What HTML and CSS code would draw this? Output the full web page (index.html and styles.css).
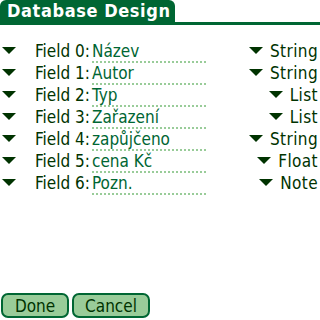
FILE: index.html
```html
<!DOCTYPE html>
<html>
<head>
  <title>Database Design</title>
  <link rel="stylesheet" href="styles.css">
</head>
<body>
  <div class="form">
    <div class="titlebar">
      <div class="title">Database Design</div>
    </div>

    <div class="fields">
      <div class="row">
        <span class="arrow"></span>
        <span class="label">Field 0:</span>
        <span class="value">Název</span>
        <span class="type"><span class="arrow"></span>String</span>
      </div>
      <div class="row">
        <span class="arrow"></span>
        <span class="label">Field 1:</span>
        <span class="value">Autor</span>
        <span class="type"><span class="arrow"></span>String</span>
      </div>
      <div class="row">
        <span class="arrow"></span>
        <span class="label">Field 2:</span>
        <span class="value">Typ</span>
        <span class="type"><span class="arrow"></span>List</span>
      </div>
      <div class="row">
        <span class="arrow"></span>
        <span class="label">Field 3:</span>
        <span class="value">Zařazení</span>
        <span class="type"><span class="arrow"></span>List</span>
      </div>
      <div class="row">
        <span class="arrow"></span>
        <span class="label">Field 4:</span>
        <span class="value">zapůjčeno</span>
        <span class="type"><span class="arrow"></span>String</span>
      </div>
      <div class="row">
        <span class="arrow"></span>
        <span class="label">Field 5:</span>
        <span class="value">cena Kč</span>
        <span class="type"><span class="arrow"></span>Float</span>
      </div>
      <div class="row">
        <span class="arrow"></span>
        <span class="label">Field 6:</span>
        <span class="value">Pozn.</span>
        <span class="type"><span class="arrow"></span>Note</span>
      </div>
    </div>

    <div class="buttons">
      <button class="btn btn-done">Done</button>
      <button class="btn btn-cancel">Cancel</button>
    </div>
  </div>
</body>
</html>
```

FILE: styles.css
```css
/* Palm style form */
body {
  margin: 0;
  background-color: #ffffff;
  font-family: "DejaVu Sans Condensed", "DejaVu Sans", sans-serif;
  color: #003300;
}

.form {
  width: 320px;
  height: 320px;
  display: flex;
  flex-direction: column;
}

.titlebar {
  height: 22px;
  border-bottom: 3px solid #006633;
  display: flex;
}

.title {
  background-color: #006633;
  color: #ffffff;
  font-weight: bold;
  font-size: 18px;
  letter-spacing: 0.6px;
  line-height: 22px;
  padding: 0 6px 0 7px;
  width: 162px;
  border-radius: 6px 6px 0 0;
  white-space: nowrap;
}

.fields {
  padding-top: 15px;
  flex: 1;
}

.row {
  height: 22px;
  display: flex;
  align-items: center;
  font-size: 17px;
}

.arrow {
  width: 0;
  height: 0;
  border-left: 7px solid transparent;
  border-right: 7px solid transparent;
  border-top: 7px solid #003300;
  margin-top: -2px;
}

.row > .arrow {
  margin-left: 2px;
  margin-right: 19px;
}

.label {
  width: 57px;
  white-space: nowrap;
}

.value {
  color: #006633;
  width: 114px;
  height: 20px;
  line-height: 20px;
  border-bottom: 2px dotted #99cc99;
  margin-top: 2px;
  white-space: nowrap;
}

.type {
  flex: 1;
  display: flex;
  align-items: center;
  justify-content: flex-end;
  padding-right: 2px;
  letter-spacing: 0.4px;
}

.type .arrow {
  margin-right: 7px;
}

.buttons {
  display: flex;
  gap: 3px;
  padding: 0 0 2px 1px;
}

.btn {
  font-family: "DejaVu Sans Condensed", "DejaVu Sans", sans-serif;
  font-size: 17px;
  color: #003300;
  background-color: #99cc99;
  border: 2px solid #006633;
  border-radius: 7px;
  height: 25px;
  padding: 0;
}

.btn-done {
  width: 68px;
}

.btn-cancel {
  width: 78px;
}
```
